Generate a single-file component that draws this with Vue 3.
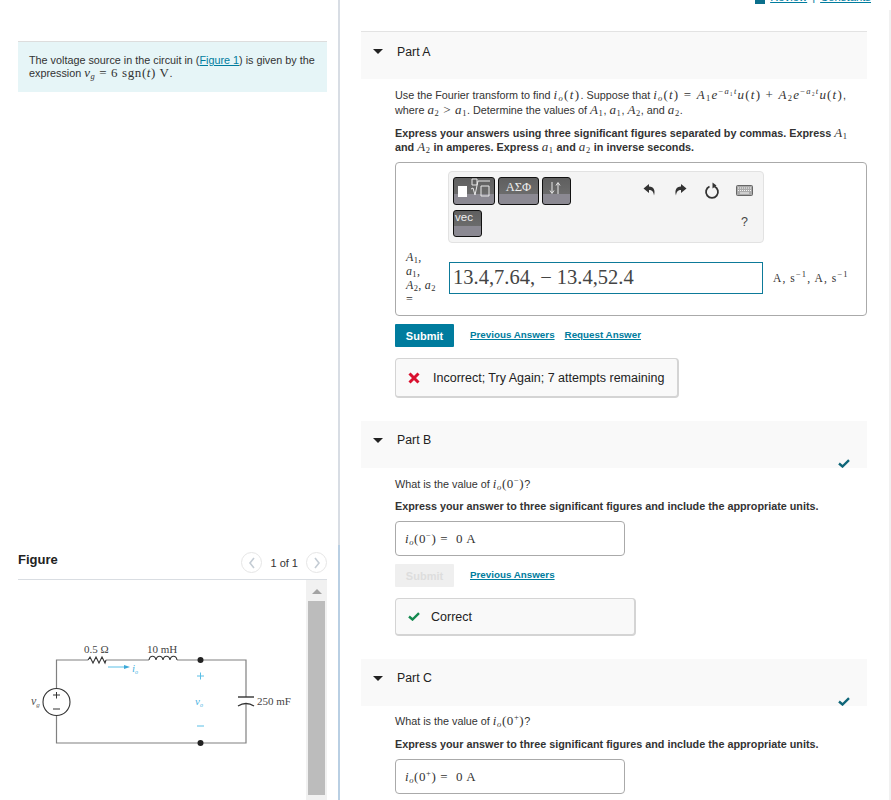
<template>
  <div class="page">
    <!-- Colonne gauche : enonce et figure -->
    <aside class="left">
      <div class="intro">
        The voltage source in the circuit in (<a href="#">Figure 1</a>) is given by the
        expression <span class="m"><i>v<sub>g</sub></i> = 6 sgn(<i>t</i>) V</span>.
      </div>
      <div class="fig-head">
        <span class="fig-title">Figure</span>
        <div class="pager">
          <span class="round">
            <svg width="8" height="12" viewBox="0 0 8 12"><path d="M6 1L2 6l4 5" fill="none" stroke="#c4ccd4" stroke-width="1.6" /></svg>
          </span>
          <span class="pager-text">1 of 1</span>
          <span class="round">
            <svg width="8" height="12" viewBox="0 0 8 12"><path d="M2 1l4 5-4 5" fill="none" stroke="#c4ccd4" stroke-width="1.6" /></svg>
          </span>
        </div>
      </div>
      <div class="fig-body">
        <svg class="circuit" width="288" height="220" viewBox="0 0 288 220">
          <g fill="none" stroke="#808080" stroke-width="1.2">
            <path d="M38.5 108V80H70M88 80H131M159 80H228V117M228 124V163H38.5V136" />
          </g>
          <g fill="none" stroke="#333" stroke-width="1.1">
            <path d="M70 80l2-3 3 6 3-6 3 6 3-6 3 6 1-3" />
            <path d="M131 80c1-5 6-5 7 0c1-5 6-5 7 0c1-5 6-5 7 0c1-5 6-5 7 0" />
            <circle cx="38.5" cy="122" r="13.5" />
            <path d="M220 117H236" stroke-width="1.4" />
            <path d="M220 126q8-5 16 0" stroke-width="1.4" />
            <path d="M35 115h7M38.5 112v6.5M35 129h7" stroke-width="1" />
          </g>
          <circle cx="182.5" cy="80" r="3" fill="#222" />
          <circle cx="182.5" cy="163" r="3" fill="#222" />
          <path d="M90 87H108" stroke="#5bbfe6" stroke-width="1" />
          <path d="M106 85l6 2-6 2z" fill="#3aa8d8" />
          <path d="M179 96h7M182.5 92.5v7M179 146h7" stroke="#5bbfe6" stroke-width="1" />
          <text x="66" y="73" class="ct">0.5 Ω</text>
          <text x="129" y="73" class="ct">10 mH</text>
          <text x="239" y="125" class="ct">250 mF</text>
          <text x="13" y="125" class="cv">v<tspan dy="2" font-size="7">g</tspan></text>
          <text x="114" y="92" class="cb">i<tspan dy="2" font-size="6">o</tspan></text>
          <text x="177" y="125" class="cb">v<tspan dy="2" font-size="6">o</tspan></text>
        </svg>
        <div class="scroll">
          <span class="up"></span>
          <span class="thumb"></span>
        </div>
      </div>
    </aside>

    <!-- Colonne droite : les parties -->
    <main class="right">
      <div class="toplinks"><span class="book"></span><a href="#">Review</a><span class="sep">|</span><a href="#">Constants</a></div>
      <div class="page-scroll"></div>

      <section v-for="part in parts" :key="part.name" class="part" :class="part.cls">
        <header class="part-head">
          <span class="caret"></span>
          <span class="part-name">{{ part.name }}</span>
          <svg v-if="part.done" class="done" width="12" height="9" viewBox="0 0 12 9"><path d="M1 4.5l3.5 3L11 1.2" fill="none" stroke="#0f6679" stroke-width="2.4" /></svg>
        </header>

        <div v-if="part.name === 'Part A'" class="part-body">
          <p class="q">
            Use the Fourier transform to find <span class="m eq-small"><i>i<sub>o</sub></i>(<i>t</i>)</span>. Suppose that
            <span class="m eq"><i>i<sub>o</sub></i>(<i>t</i>) = <i>A</i><sub>1</sub><i>e</i><sup>−<i>a</i>₁<i>t</i></sup><i>u</i>(<i>t</i>) + <i>A</i><sub>2</sub><i>e</i><sup>−<i>a</i>₂<i>t</i></sup><i>u</i>(<i>t</i>)</span>,<br />
            where <span class="m"><i>a</i><sub>2</sub> &gt; <i>a</i><sub>1</sub></span>. Determine the values of
            <span class="m"><i>A</i><sub>1</sub></span>, <span class="m"><i>a</i><sub>1</sub></span>, <span class="m"><i>A</i><sub>2</sub></span>, and <span class="m"><i>a</i><sub>2</sub></span>.
          </p>
          <p class="express">
            Express your answers using three significant figures separated by commas. Express <span class="m"><i>A</i><sub>1</sub></span><br />
            and <span class="m"><i>A</i><sub>2</sub></span> in amperes. Express <span class="m"><i>a</i><sub>1</sub></span> and <span class="m"><i>a</i><sub>2</sub></span> in inverse seconds.
          </p>

          <div class="editor">
            <div class="toolbar">
              <div class="tool-btns">
                <div class="tool-row">
                  <span class="tbtn w-templ">
                    <span class="white-box"></span>
                    <svg width="21" height="20" viewBox="0 0 21 20"><path d="M2 1h5v6H2zM1 11l2-1 2 7 3-14h12M11 8h8v10h-8z" fill="none" stroke="#e8e8e8" stroke-width="1" /></svg>
                  </span>
                  <span class="tbtn w-greek">ΑΣΦ</span>
                  <span class="tbtn w-arrows">
                    <svg width="14" height="14" viewBox="0 0 14 14"><path d="M4 1v11M2 9.5L4 12.5 6 9.5M10 13V2M8 4.5L10 1.5 12 4.5" fill="none" stroke="#e8e8e8" stroke-width="1" /></svg>
                  </span>
                </div>
                <div class="tool-row"><span class="tbtn w-vec">vec</span></div>
              </div>
              <div class="tool-actions">
                <div class="act-row">
                  <svg width="14" height="14" viewBox="0 0 14 14"><path d="M6 1L.5 5.5 6 10V7c3 0 4.5 1.5 5 5.5 1.5-5 0-9-5-9z" fill="#333" /></svg>
                  <svg width="14" height="14" viewBox="0 0 14 14"><path d="M8 1l5.5 4.5L8 10V7c-3 0-4.5 1.500-5 5.5-1.5-5 0-9 5-9z" fill="#333" /></svg>
                  <svg width="16" height="17" viewBox="0 0 16 17"><path d="M5.5 4.5a6 6 0 1 0 5 0" fill="none" stroke="#333" stroke-width="1.8" /><path d="M8.5.5v6l4-3z" fill="#333" /></svg>
                  <svg width="17" height="11" viewBox="0 0 17 11"><rect x=".5" y=".5" width="16" height="10" rx="1" fill="#aaa" stroke="#666" /><path d="M2 3h13M2 5.5h13" stroke="#f4f4f4" stroke-dasharray="1 1" /><path d="M4 8h9" stroke="#f4f4f4" /></svg>
                </div>
                <div class="help">?</div>
              </div>
            </div>
            <div class="answer-row">
              <div class="ans-label m"><i>A</i><sub>1</sub>,<br /><i>a</i><sub>1</sub>,<br /><i>A</i><sub>2</sub>, <i>a</i><sub>2</sub><br />=</div>
              <div class="ans-input">13.4,7.64, − 13.4,52.4</div>
              <div class="ans-unit m">A, s<sup>−1</sup>, A, s<sup>−1</sup></div>
            </div>
          </div>

          <div class="actions">
            <button class="submit">Submit</button>
            <a href="#">Previous Answers</a>
            <a href="#">Request Answer</a>
          </div>

          <div class="feedback bad">
            <svg width="12" height="12" viewBox="0 0 12 12"><path d="M1.5 1.5l9 9M10.5 1.5l-9 9" stroke="#d9112f" stroke-width="3" /></svg>
            <span>Incorrect; Try Again; 7 attempts remaining</span>
          </div>
        </div>

        <div v-else class="part-body">
          <p class="q">What is the value of <span class="m"><i>i<sub>o</sub></i>(0<sup>{{ part.sign }}</sup>)</span>?</p>
          <p class="express">Express your answer to three significant figures and include the appropriate units.</p>
          <div class="result m"><i>i<sub>o</sub></i>(0<sup>{{ part.sign }}</sup>) = &nbsp;0 A</div>
          <template v-if="part.name === 'Part B'">
            <div class="actions">
              <button class="submit off" disabled>Submit</button>
              <a href="#">Previous Answers</a>
            </div>
            <div class="feedback good">
              <svg width="12" height="9" viewBox="0 0 12 9"><path d="M1 4.5l3.5 3L11 1.2" fill="none" stroke="#138a4f" stroke-width="2.4" /></svg>
              <span>Correct</span>
            </div>
          </template>
        </div>
      </section>
    </main>
  </div>
</template>

<script setup>
const parts = [
  { name: "Part A", cls: "a", done: false },
  { name: "Part B", cls: "b", done: true, sign: "−" },
  { name: "Part C", cls: "c", done: true, sign: "+" },
];
</script>

<style scoped>
.page {
  display: flex;
  height: 800px;
  overflow: hidden;
  font-family: "Liberation Sans", Arial, sans-serif;
  font-size: 10.8px;
  color: #333;
  background: #fff;
}
a {
  color: #007c9e;
  text-decoration: underline;
}
.m {
  font-family: "Liberation Serif", "DejaVu Serif", serif;
  font-size: 13px;
  font-weight: normal;
  letter-spacing: 0.6px;
}
.eq {
  letter-spacing: 1.2px;
}
.eq-small {
  letter-spacing: 1.4px;
}
sub,
sup {
  font-size: 8.5px;
  line-height: 0;
}
sub {
  vertical-align: -2px;
}

.left {
  width: 340px;
  flex: none;
  box-sizing: border-box;
  padding: 41px 11px 0 18px;
  border-right: 2px solid;
  border-image: linear-gradient(#d8dde4 545px, #b9cfe3 545px) 1;
}
.intro {
  height: 51px;
  box-sizing: border-box;
  padding: 12px 10px 0 11px;
  background: #e6f5f7;
  border-top: 1px solid #ddd;
  line-height: 13px;
}
.intro .m,
.q .m {
  line-height: 0;
}
.fig-head {
  display: flex;
  justify-content: space-between;
  align-items: center;
  height: 40px;
  margin-top: 447px;
  border-bottom: 1px solid #d9dde2;
}
.fig-title {
  font-size: 13px;
  font-weight: bold;
  color: #222;
}
.pager {
  display: flex;
  align-items: center;
  gap: 8px;
  margin-top: 7px;
}
.pager-text {
  font-size: 11px;
}
.round {
  width: 21px;
  height: 21px;
  box-sizing: border-box;
  display: flex;
  align-items: center;
  justify-content: center;
  border: 1px solid #e6e6e6;
  border-radius: 50%;
}
.fig-body {
  display: flex;
  height: 260px;
}
.circuit {
  flex: none;
}
.ct {
  font-family: "Liberation Serif", serif;
  font-size: 11px;
  fill: #444;
}
.cv {
  font-family: "Liberation Serif", serif;
  font-style: italic;
  font-size: 12px;
  fill: #555;
}
.cb {
  font-family: "Liberation Serif", serif;
  font-style: italic;
  font-size: 11px;
  fill: #4ab4e2;
}
.scroll {
  width: 21px;
  background: #f1f1f1;
  display: flex;
  flex-direction: column;
  align-items: center;
}
.up {
  margin: 9px 0 7px;
  border-left: 5px solid transparent;
  border-right: 5px solid transparent;
  border-bottom: 5px solid #a3a3a3;
}
.thumb {
  width: 17px;
  height: 194px;
  background: #bcbcbc;
}

.right {
  flex: 1;
  min-width: 0;
  padding: 0 24px 0 21px;
  position: relative;
}
.toplinks {
  position: absolute;
  top: -9px;
  right: 20px;
  display: flex;
  align-items: center;
  font-size: 11.3px;
  line-height: 13px;
}
.sep {
  margin: 0 5px;
  color: #007c9e;
}
.book {
  width: 10px;
  height: 12px;
  margin-right: 5px;
  background: #0b6f8c;
}
.page-scroll {
  position: absolute;
  top: 10px;
  right: 0;
  bottom: 0;
  width: 2px;
  background: #f1f1f1;
}
.part-head {
  position: relative;
  height: 47px;
  box-sizing: border-box;
  padding: 12px 0 0 36px;
  background: #f9f9f9;
  font-size: 12.3px;
  color: #222;
}
.part.a {
  padding-top: 31px;
}
.part.a .part-head {
  border-top: 1px solid #e3e3e3;
  height: 48px;
  padding-top: 13px;
}
.caret {
  position: absolute;
  left: 12px;
  top: 17px;
  border-left: 5px solid transparent;
  border-right: 5px solid transparent;
  border-top: 5px solid #222;
}
.done {
  position: absolute;
  right: 17px;
  bottom: 0;
}
.part-body {
  padding-left: 34px;
}
p {
  margin: 0;
}
.q {
  line-height: 15px;
  padding-top: 9px;
}
.c .q {
  padding-top: 8px;
}
.express {
  font-weight: bold;
  line-height: 14px;
  margin-top: 7px;
}
.a .express {
  margin-top: 8px;
}
.c .express {
  margin-top: 8px;
}
.express .m {
  line-height: 0;
}

.editor {
  margin-top: 8px;
  height: 154px;
  box-sizing: border-box;
  border: 1px solid #aaa;
  border-radius: 4px;
  padding: 8px 4px 0 10px;
}
.toolbar {
  display: flex;
  justify-content: space-between;
  width: 316px;
  height: 72px;
  box-sizing: border-box;
  margin-left: 42px;
  padding: 5px 4px;
  background: #f4f4f4;
  border: 1px solid #e2e2e2;
  border-radius: 4px;
}
.tool-row {
  display: flex;
  gap: 3px;
  margin-bottom: 5px;
}
.tbtn {
  height: 28px;
  box-sizing: border-box;
  display: flex;
  align-items: flex-start;
  justify-content: center;
  background: linear-gradient(#5f5f5f 0, #6b6b6b 60%, #8b8992 60%);
  border: 1px solid #111;
  border-radius: 3px;
  color: #eee;
  font-size: 11.5px;
}
.w-templ {
  width: 42px;
  gap: 3px;
}
.white-box {
  width: 9px;
  height: 11px;
  margin-top: 8px;
  background: #fff;
}
.w-greek {
  width: 41px;
  padding-top: 2px;
  font-family: "Liberation Serif", serif;
  font-size: 12.5px;
}
.w-arrows {
  width: 29px;
  justify-content: flex-start;
  padding: 3px 0 0 5px;
}
.w-vec {
  width: 29px;
  height: 27px;
  justify-content: flex-start;
  padding-left: 1px;
}
.tool-actions {
  width: 110px;
  margin-right: 6px;
}
.act-row {
  display: flex;
  justify-content: space-between;
  align-items: center;
  height: 26px;
}
.help {
  margin-top: 12px;
  text-align: right;
  padding-right: 5px;
  font-size: 12.5px;
  line-height: 14px;
  color: #444;
}
.answer-row {
  display: flex;
  align-items: center;
  margin-top: 7px;
}
.ans-label {
  width: 43px;
  flex: none;
  font-size: 12px;
  line-height: 14px;
  letter-spacing: 0.3px;
}
.ans-input {
  width: 314px;
  height: 32px;
  box-sizing: border-box;
  flex: none;
  padding-left: 3px;
  border: 1px solid #0d7a99;
  font-family: "Liberation Serif", serif;
  font-size: 20.5px;
  line-height: 28px;
  color: #444;
}
.ans-unit {
  margin-left: 10px;
  white-space: nowrap;
  font-size: 11.5px;
  letter-spacing: 1.1px;
}

.actions {
  display: flex;
  align-items: center;
  gap: 10px;
  margin-top: 8px;
  height: 23px;
  font-size: 9.8px;
  font-weight: bold;
}
.actions a {
  margin-top: -2px;
}
.submit {
  width: 59px;
  height: 23px;
  margin-right: 6px;
  padding: 0;
  border: none;
  border-radius: 1px;
  background: #007c9e;
  color: #fff;
  font: bold 11px "Liberation Sans", Arial, sans-serif;
}
.submit.off {
  background: #efefef;
  color: #ddd;
}
.feedback {
  display: flex;
  align-items: center;
  gap: 13px;
  width: 284px;
  height: 40px;
  box-sizing: border-box;
  margin-top: 11px;
  padding: 0 12px;
  background: #f9f9f9;
  border: 1px solid #d4d4d4;
  border-bottom-width: 2px;
  border-right-width: 2px;
  border-radius: 4px;
  font-size: 12.5px;
  color: #222;
}
.feedback.good {
  width: 241px;
  height: 38px;
  gap: 11px;
}
.result {
  margin-top: 8px;
  width: 230px;
  height: 35px;
  box-sizing: border-box;
  padding: 0 9px;
  line-height: 33px;
  border: 1px solid #aaa;
  border-radius: 4px;
}
.part.b,
.part.c {
  margin-top: 23px;
}
</style>
